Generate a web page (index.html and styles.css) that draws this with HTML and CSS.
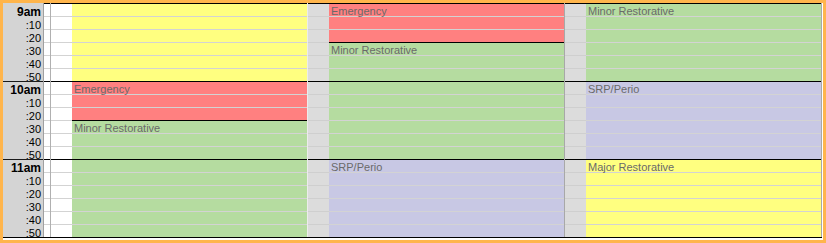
FILE: index.html
```html
<!DOCTYPE html>
<html>
<head>
<meta charset="utf-8">
<link rel="stylesheet" href="styles.css">
</head>
<body>
<div class="frame">
  <div class="grid">
    <div class="col time">
      <div class="hour first">
        <div class="lbl hr">9am</div><div class="lbl">:10</div><div class="lbl">:20</div><div class="lbl">:30</div><div class="lbl">:40</div><div class="lbl">:50</div>
      </div>
      <div class="hour">
        <div class="lbl hr">10am</div><div class="lbl">:10</div><div class="lbl">:20</div><div class="lbl">:30</div><div class="lbl">:40</div><div class="lbl">:50</div>
      </div>
      <div class="hour">
        <div class="lbl hr">11am</div><div class="lbl">:10</div><div class="lbl">:20</div><div class="lbl">:30</div><div class="lbl">:40</div><div class="lbl">:50</div>
      </div>
    </div>
    <div class="col narrow-a">
      <div class="blk s6"></div><div class="blk s6"></div><div class="blk s6"></div>
    </div>
    <div class="col narrow-b">
      <div class="blk s6"></div><div class="blk s6"></div><div class="blk s6"></div>
    </div>
    <div class="col res res-1">
      <div class="blk s6 yellow"></div>
      <div class="blk s3 red"><span class="appt">Emergency</span></div>
      <div class="blk s3 green"><span class="appt">Minor Restorative</span></div>
      <div class="blk s6 green"></div>
    </div>
    <div class="col gutter">
      <div class="blk s6"></div><div class="blk s6"></div><div class="blk s6"></div>
    </div>
    <div class="col res res-2">
      <div class="blk s3 red"><span class="appt">Emergency</span></div>
      <div class="blk s3 green"><span class="appt">Minor Restorative</span></div>
      <div class="blk s6 green"></div>
      <div class="blk s6 lavender"><span class="appt">SRP/Perio</span></div>
    </div>
    <div class="col gutter">
      <div class="blk s6"></div><div class="blk s6"></div><div class="blk s6"></div>
    </div>
    <div class="col res res-3">
      <div class="blk s6 green"><span class="appt">Minor Restorative</span></div>
      <div class="blk s6 lavender"><span class="appt">SRP/Perio</span></div>
      <div class="blk s6 yellow"><span class="appt">Major Restorative</span></div>
    </div>
  </div>
</div>
</body>
</html>
```

FILE: styles.css
```css
html, body {
  margin: 0;
  padding: 0;
  background: #ffffff;
}

.frame {
  width: 820px;
  height: 237px;
  border: 3px solid #ffb54c;
  background: #ffffff;
  font-family: "Liberation Sans", Arial, sans-serif;
}

.grid {
  display: flex;
  border-bottom: 1px solid #000000;
  width: 819px;
}

.col {
  display: flex;
  flex-direction: column;
  flex: none;
}

/* time labels */
.time {
  width: 40px;
  background: #d4d4d4;
  border-right: 1px solid #a0a0a0;
}

.hour {
  height: 77px;
  border-top: 1px solid #1a1a1a;
}

.hour.first {
  border-top-color: #d4d4d4;
}

.lbl {
  box-sizing: border-box;
  height: 13px;
  line-height: 11px;
  padding-top: 3px;
  padding-right: 2px;
  text-align: right;
  font-size: 11px;
  color: #000000;
  white-space: nowrap;
}

.lbl.hr {
  padding-top: 3px;
  font-size: 12px;
  font-weight: bold;
}

/* cells */
.blk {
  border-top: 1px solid #000000;
  background-color: #ffffff;
  background-image: repeating-linear-gradient(to bottom, transparent 0, transparent 12px, #d3d3d3 12px, #d3d3d3 13px);
  overflow: hidden;
}

.s3 { height: 38px; }
.s6 { height: 77px; }

.narrow-a {
  width: 6px;
  border-right: 1px solid #b0b0b0;
}

.narrow-b {
  width: 21px;
}

.gutter {
  width: 21px;
}

.gutter .blk {
  background-color: #dcdcdc;
  background-image: repeating-linear-gradient(to bottom, transparent 0, transparent 12px, #cfcfcf 12px, #cfcfcf 13px);
}

.res {
  width: 235px;
  border-right: 1px solid #a8a8a8;
}

.res-1 {
  border-right-color: #ececec;
}

.yellow { background-color: #ffff80; }
.red { background-color: #ff8080; }
.green { background-color: #b5dca0; }
.lavender { background-color: #c8c8e4; }

.appt {
  display: block;
  padding: 1px 0 0 2px;
  line-height: 13px;
  font-size: 11px;
  color: #6a6a6a;
  white-space: nowrap;
}
```
